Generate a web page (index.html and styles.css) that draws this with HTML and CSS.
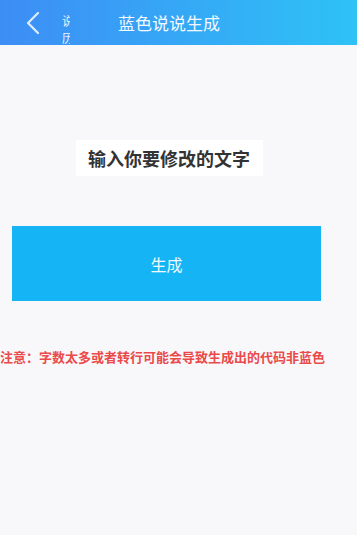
FILE: index.html
```html
<!DOCTYPE html>
<html lang="zh">
<head>
    <meta charset="UTF-8">
    <meta name="viewport" content="width=device-width, initial-scale=1.0">
    <title>蓝色说说生成</title>
    <link rel="stylesheet" href="styles.css">
</head>
<body>
    <div class="header">
        <div class="back">
            <svg width="16" height="24" viewBox="0 0 16 24">
                <path d="M13 2 L3 12 L13 22" fill="none" stroke="#dfeeff" stroke-width="2.2" stroke-linecap="round" stroke-linejoin="round"/>
            </svg>
        </div>
        <div class="sub">说说<br>历史</div>
        <div class="title">蓝色说说生成</div>
    </div>

    <div class="content">
        <div class="input-row">
            <div class="input">输入你要修改的文字</div>
        </div>
        <button class="make">生成</button>
        <p class="note">注意：字数太多或者转行可能会导致生成出的代码非蓝色</p>
    </div>
</body>
</html>
```

FILE: styles.css
```css
* {
    margin: 0;
    padding: 0;
    box-sizing: border-box;
}

body {
    font-family: "Noto Sans CJK SC", "Noto Sans", sans-serif;
    background-color: #f8f8fa;
    width: 357px;
    min-height: 535px;
}

.header {
    height: 45px;
    background: linear-gradient(90deg, #3d8df5, #2ec2f6);
    display: flex;
    align-items: center;
    color: #fff;
    overflow: hidden;
}

.back {
    width: 62px;
    padding-left: 25px;
    display: flex;
    align-items: center;
    height: 45px;
}

.sub {
    width: 8px;
    overflow: hidden;
    white-space: nowrap;
    font-size: 12px;
    line-height: 17px;
    margin-top: 12px;
    color: #e6f2ff;
}

.title {
    margin-left: 48px;
    font-size: 17px;
    color: #f2f8ff;
}

.content {
    padding-top: 95px;
}

.input-row {
    padding-left: 76px;
}

.input {
    width: 187px;
    height: 36px;
    background-color: #fff;
    padding-left: 12px;
    font-size: 18px;
    font-weight: bold;
    line-height: 36px;
    color: #333;
}

.make {
    display: block;
    margin: 50px 0 0 12px;
    width: 309px;
    height: 75px;
    border: none;
    background-color: #15b5f5;
    color: #f0faff;
    font-family: inherit;
    font-size: 16px;
}

.note {
    margin-top: 46px;
    font-size: 13px;
    font-weight: bold;
    color: #ea4a4a;
    white-space: nowrap;
}
```
